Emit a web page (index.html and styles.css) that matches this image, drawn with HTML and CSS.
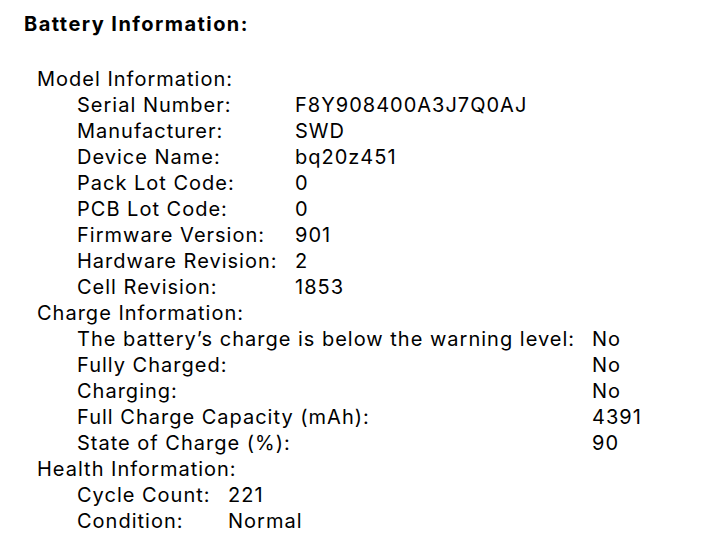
FILE: index.html
```html
<!DOCTYPE html>
<html>
<head>
<meta charset="utf-8">
<link rel="stylesheet" href="styles.css">
</head>
<body>
<div class="page">
  <h1 class="title">Battery Information:</h1>
  <div class="section">
    <div class="section-name">Model Information:</div>
    <dl class="kv kv-model">
      <dt>Serial Number:</dt><dd>F8Y908400A3J7Q0AJ</dd>
      <dt>Manufacturer:</dt><dd>SWD</dd>
      <dt>Device Name:</dt><dd>bq20z451</dd>
      <dt>Pack Lot Code:</dt><dd>0</dd>
      <dt>PCB Lot Code:</dt><dd>0</dd>
      <dt>Firmware Version:</dt><dd>901</dd>
      <dt>Hardware Revision:</dt><dd>2</dd>
      <dt>Cell Revision:</dt><dd>1853</dd>
    </dl>
  </div>
  <div class="section">
    <div class="section-name">Charge Information:</div>
    <dl class="kv kv-charge">
      <dt>The battery’s charge is below the warning level:</dt><dd>No</dd>
      <dt>Fully Charged:</dt><dd>No</dd>
      <dt>Charging:</dt><dd>No</dd>
      <dt>Full Charge Capacity (mAh):</dt><dd>4391</dd>
      <dt>State of Charge (%):</dt><dd>90</dd>
    </dl>
  </div>
  <div class="section">
    <div class="section-name">Health Information:</div>
    <dl class="kv kv-health">
      <dt>Cycle Count:</dt><dd>221</dd>
      <dt>Condition:</dt><dd>Normal</dd>
    </dl>
  </div>
</div>
</body>
</html>
```

FILE: styles.css
```css
html, body {
  margin: 0;
  padding: 0;
  background: #ffffff;
}

body {
  font-family: Inter, "Liberation Sans", Arial, sans-serif;
  font-size: 20px;
  line-height: 26px;
  letter-spacing: 1px;
  color: #000000;
}

.page {
  padding: 11px 0 0 24px;
}

.title {
  margin: 0 0 29px 0;
  font-size: 20px;
  line-height: 26px;
  font-weight: 700;
  letter-spacing: 1.45px;
}

.section {
  margin-left: 13px;
}

.section-name {
  margin: 0;
}

.kv {
  display: grid;
  margin: 0 0 0 40px;
}

.kv dt, .kv dd {
  margin: 0;
  white-space: nowrap;
}

.kv-model {
  grid-template-columns: 218px auto;
}

.kv-charge {
  grid-template-columns: 515px auto;
}

.kv-health {
  grid-template-columns: 151px auto;
}
```
